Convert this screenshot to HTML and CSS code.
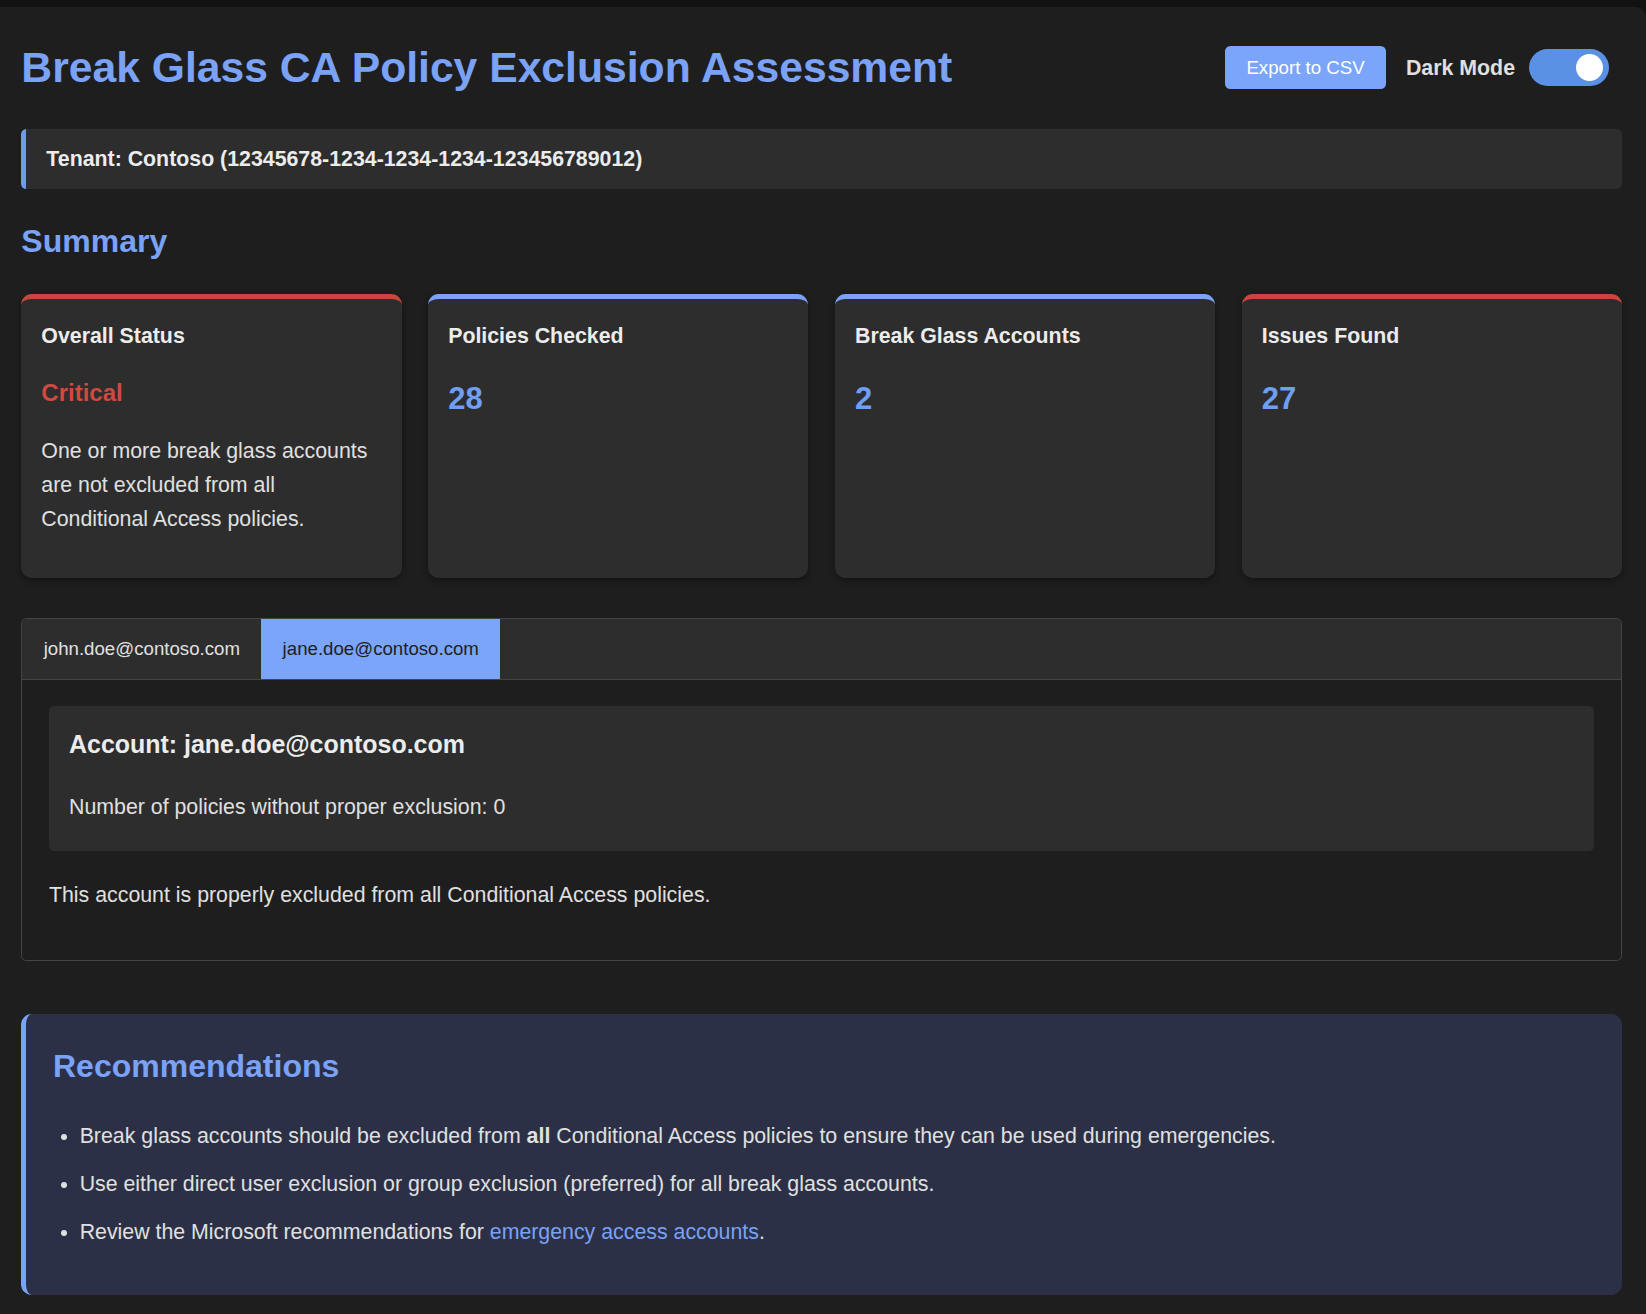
FILE: index.html
```html
<!DOCTYPE html>
<html lang="en">
<head>
<meta charset="utf-8">
<title>Break Glass CA Policy Exclusion Assessment</title>
<link rel="stylesheet" href="styles.css">
</head>
<body>
<div class="container">
  <header class="header">
    <h1 class="title">Break Glass CA Policy Exclusion Assessment</h1>
    <div class="controls">
      <button class="export-btn">Export to CSV</button>
      <span class="mode-label">Dark Mode</span>
      <span class="switch"><span class="knob"></span></span>
    </div>
  </header>

  <div class="tenant">Tenant: Contoso (12345678-1234-1234-1234-123456789012)</div>

  <h2 class="section-title">Summary</h2>

  <div class="cards">
    <div class="card card-red">
      <h3 class="card-title">Overall Status</h3>
      <div class="status-critical">Critical</div>
      <p class="card-text">One or more break glass accounts are not excluded from all Conditional Access policies.</p>
    </div>
    <div class="card card-blue">
      <h3 class="card-title">Policies Checked</h3>
      <div class="card-number">28</div>
    </div>
    <div class="card card-blue">
      <h3 class="card-title">Break Glass Accounts</h3>
      <div class="card-number">2</div>
    </div>
    <div class="card card-red">
      <h3 class="card-title">Issues Found</h3>
      <div class="card-number">27</div>
    </div>
  </div>

  <div class="tabs">
    <div class="tab-bar">
      <button class="tab">john.doe@contoso.com</button>
      <button class="tab tab-active">jane.doe@contoso.com</button>
    </div>
    <div class="tab-content">
      <div class="account-box">
        <h3 class="account-title">Account: jane.doe@contoso.com</h3>
        <p class="account-count">Number of policies without proper exclusion: 0</p>
      </div>
      <p class="account-ok">This account is properly excluded from all Conditional Access policies.</p>
    </div>
  </div>

  <div class="recs">
    <h2 class="recs-title">Recommendations</h2>
    <ul class="recs-list">
      <li>Break glass accounts should be excluded from <strong>all</strong> Conditional Access policies to ensure they can be used during emergencies.</li>
      <li>Use either direct user exclusion or group exclusion (preferred) for all break glass accounts.</li>
      <li>Review the Microsoft recommendations for <a class="link" href="#">emergency access accounts</a>.</li>
    </ul>
  </div>
</div>
</body>
</html>
```

FILE: styles.css
```css
* {
  box-sizing: border-box;
}

html, body {
  margin: 0;
  padding: 0;
}

body {
  background: #121212;
  color: #e0e0e0;
  font-family: "Liberation Sans", Arial, sans-serif;
  font-size: 21.33px;
  line-height: 1.6;
  padding-top: 7px;
  overflow: hidden;
}

.container {
  background: #1e1e1e;
  border-radius: 0 10px 0 0;
  padding: 26.67px 24px 19px 21.33px;
  min-height: calc(100vh - 7px);
}

.header {
  display: flex;
  justify-content: space-between;
  align-items: center;
  margin-bottom: 26.67px;
}

.title {
  margin: -1px 0 1px;
  font-size: 42.67px;
  line-height: 1.6;
  font-weight: bold;
  color: #7aa2f7;
}

.controls {
  display: flex;
  align-items: center;
  margin-right: 13px;
}

.export-btn {
  background: #7aa5fa;
  color: #ffffff;
  border: none;
  border-radius: 5.33px;
  font-family: "Liberation Sans", Arial, sans-serif;
  font-size: 18.67px;
  line-height: 21.5px;
  padding: 10.67px 21.33px;
  margin-right: 20px;
}

.mode-label {
  font-weight: bold;
  font-size: 21.33px;
  color: #e0e0e0;
  margin-right: 14px;
}

.switch {
  position: relative;
  display: inline-block;
  width: 80px;
  height: 37px;
  border-radius: 19px;
  background: #5b91e5;
}

.knob {
  position: absolute;
  top: 5px;
  right: 6px;
  width: 27px;
  height: 27px;
  border-radius: 50%;
  background: #ffffff;
}

.tenant {
  background: #2d2d2d;
  border-left: 5.33px solid #6f9af0;
  border-radius: 5.33px;
  padding: 13.33px 20px;
  font-weight: bold;
  color: #ececec;
}

.section-title {
  margin: 26.67px 0;
  font-size: 32px;
  line-height: 1.6;
  color: #7aa2f7;
}

.cards {
  display: grid;
  grid-template-columns: repeat(4, 1fr);
  gap: 26.67px;
  margin-bottom: 40px;
}

.card {
  background: #2d2d2d;
  border-radius: 10.67px;
  padding: 20px;
  border-top: 5.33px solid #7aa2f7;
  box-shadow: 0 2.67px 6.67px rgba(0, 0, 0, 0.35);
}

.card-red {
  border-top-color: #c8473d;
}

.card-blue {
  border-top-color: #7aa2f7;
}

.card-title {
  margin: 0 0 21.33px;
  font-size: 21.33px;
  line-height: 1.6;
  font-weight: bold;
  color: #ececec;
}

.status-critical {
  font-size: 24px;
  line-height: 38.4px;
  font-weight: bold;
  color: #cf4a3f;
}

.card-text {
  margin: 21.33px 0;
}

.card-number {
  font-size: 31px;
  line-height: 1.6;
  font-weight: bold;
  color: #6f9ff3;
}

.tabs {
  border: 1px solid #444444;
  border-radius: 5.33px;
  overflow: hidden;
  margin-bottom: 53.33px;
}

.tab-bar {
  display: flex;
  background: #2d2d2d;
  border-bottom: 1px solid #444444;
}

.tab {
  background: transparent;
  border: none;
  color: #e0e0e0;
  font-family: "Liberation Sans", Arial, sans-serif;
  font-size: 18.67px;
  line-height: 28px;
  padding: 16px 21.33px;
}

.tab-active {
  background: #7aa5fa;
  color: #1e1e1e;
}

.tab-content {
  padding: 26.67px;
}

.account-box {
  background: #2d2d2d;
  border-radius: 5.33px;
  padding: 19px 20px 20px;
  margin-bottom: 26.67px;
}

.account-title {
  margin: 0 0 24.96px;
  font-size: 24.96px;
  line-height: 1.6;
  font-weight: bold;
  color: #ececec;
}

.account-count {
  margin: 0 0 6.67px;
}

.account-ok {
  margin: 0 0 21.33px;
}

.recs {
  background: #2b3046;
  border-left: 5.33px solid #7aa2f7;
  border-radius: 10.67px;
  padding: 26.67px 26.67px 25px;
}

.recs-title {
  margin: 0 0 26.5px;
  font-size: 32px;
  line-height: 1.6;
  color: #7aa2f7;
}

.recs-list {
  margin: 0 0 21.33px;
  padding-left: 26.67px;
}

.recs-list li {
  margin-bottom: 14px;
}

.link {
  color: #7aa2f7;
  text-decoration: none;
}
```
